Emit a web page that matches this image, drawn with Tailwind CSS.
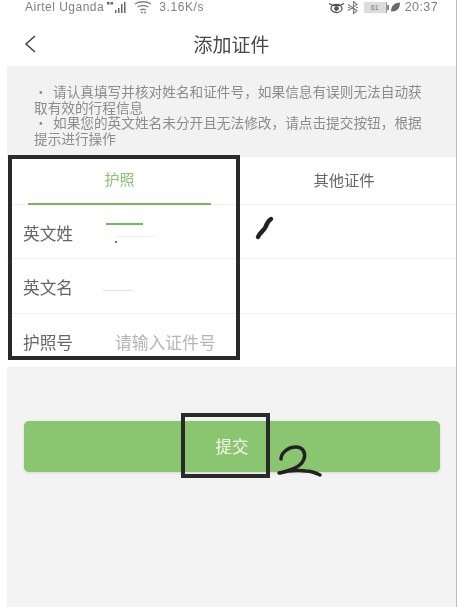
<!DOCTYPE html>
<html lang="zh">
<head>
  <meta charset="UTF-8">
  <title>添加证件</title>
  <script src="https://cdn.jsdelivr.net/npm/@tailwindcss/browser@4"></script>
</head>
<body class="bg-white w-[458px] h-[607px] overflow-hidden relative blur-[0.35px] font-['Noto_Sans_CJK_SC','Liberation_Sans',sans-serif]">
  <div class="ml-[7px] w-[449px] h-[607px] border-r border-[#bbbbbb] box-content flex flex-col">
    <!-- Status bar -->
    <div class="h-[14px] pl-[18px] pr-[18px] flex items-center justify-between text-[12px] text-[#808080] font-['Liberation_Sans']">
      <div class="flex items-center">
        <span class="tracking-[0.5px]">Airtel Uganda</span>
        <svg class="ml-[2px]" width="24" height="13" viewBox="0 0 24 13" fill="#666666"><rect x="1" y="1" width="2.500" height="2.500"/><rect x="4.500" y="1" width="2.500" height="2.500"/><rect x="9" y="9" width="1.500" height="3"/><rect x="12" y="7" width="1.500" height="5"/><rect x="15" y="3" width="1.500" height="9"/><rect x="18" y="1" width="1.500" height="11"/></svg>
        <svg class="ml-[4px]" width="18" height="13" viewBox="0 0 18 13" fill="none" stroke="#858585" stroke-width="1.300"><path d="M1 3c4-3 12-3 16 0M3.500 6c3-2 8-2 11 0M6 9c2-1 4-1 6 0"/><circle cx="8" cy="11.500" r="1" fill="#858585" stroke="none"/><circle cx="11" cy="11.500" r="1" fill="#858585" stroke="none"/></svg>
        <span class="ml-[7px] tracking-[0.6px]">3.16K/s</span>
      </div>
      <div class="flex items-center">
        <svg width="17" height="13" viewBox="0 0 17 13" fill="none" stroke="#555555" stroke-width="1.300"><path d="M1 2.500c4 3 11 3 15 0"/><ellipse cx="8.500" cy="7.500" rx="5.500" ry="4"/><circle cx="8.500" cy="7.500" r="1.700" fill="#555555"/></svg>
        <svg class="ml-[2px]" width="12" height="13" viewBox="0 0 12 13" fill="none" stroke="#808080" stroke-width="1.200"><path d="M1 3.500l9 6-3.500 3V.5L10 3.500l-9 6M1 6.500h2M9 6.500h2"/></svg>
        <div class="ml-[5px] w-[23px] h-[11px] bg-[#dcdcdc] text-[7px] leading-[11px] text-center text-[#777777] border-r border-[#999999]">61</div>
        <div class="w-[2px] h-[5px] bg-[#888888]"></div>
        <svg class="ml-[1px]" width="11" height="12" viewBox="0 0 11 12" fill="#6a6a6a"><path d="M1 10.500C1 5 4 2 10 1.500c0 6-3 9-8 9z"/></svg>
        <span class="text-[12.500px] tracking-[0.4px] ml-[4px]">20:37</span>
      </div>
    </div>
    <!-- Header -->
    <div class="h-[52px] flex items-center justify-center relative text-[19px] text-[#484848]">
      <svg class="absolute left-[17px] top-[21px]" width="12" height="18" viewBox="0 0 12 18" fill="none" stroke="#444444" stroke-width="1.600"><path d="M11 1L2 9l9 8"/></svg>
      <span class="mt-[8px]">添加证件</span>
    </div>
    <!-- Notice -->
    <div class="h-[91px] bg-[#f2f2f2] pl-[27px] pr-[26px] pt-[18px] text-[13.670px] leading-[15.700px] text-[#8c8c8c]">
      <p><span class="inline-block w-[19px]">·</span>请认真填写并核对姓名和证件号，如果信息有误则无法自动获取有效的行程信息</p>
      <p><span class="inline-block w-[19px]">·</span>如果您的英文姓名未分开且无法修改，请点击提交按钮，根据提示进行操作</p>
    </div>
    <!-- Form -->
    <div class="h-[210px] bg-white text-[#666666]">
      <div class="flex h-[48px] border-b border-[#f0f0f0]">
        <div class="w-[225px] relative flex items-center justify-center text-[15px] text-[#88c46f] pb-[3px]">
          护照
          <div class="absolute left-[21px] bottom-[-1px] w-[183px] h-[2px] bg-[#74b85c]"></div>
        </div>
        <div class="flex-1 flex items-center justify-center text-[15.300px] pb-[3px]">其他证件</div>
      </div>
      <div class="h-[54px] pl-[16px] flex items-center border-b border-[#f0f0f0] text-[16.700px]">
        <span class="w-[83px] mt-[4px]">英文姓</span>
        <div class="relative w-[50px] h-full">
          <div class="absolute left-0 top-[18px] w-[37px] h-[2px] bg-[#74b85c]"></div>
          <div class="absolute left-[9px] top-[36px] w-[2px] h-[2px] bg-[#3f8f8f]"></div>
          <div class="absolute left-[10px] top-[31px] w-[40px] h-px bg-[#f0f0f0]"></div>
        </div>
      </div>
      <div class="h-[55px] pl-[16px] flex items-center border-b border-[#f0f0f0] text-[16.700px]">
        <span class="w-[80px] mt-[4px]">英文名</span>
        <div class="w-[30px] h-px bg-[#e2e2e2] mt-[9px]"></div>
      </div>
      <div class="h-[53px] pl-[16px] flex items-center text-[16.700px]">
        <span class="w-[92px] mt-[4px]">护照号</span>
        <span class="text-[#b5b5b5] text-[16.800px] mt-[4px]">请输入证件号</span>
      </div>
    </div>
    <!-- Button area -->
    <div class="flex-1 bg-[#f3f3f3] pt-[54px] pl-[17px] pr-[16px]">
      <button class="w-full h-[51px] rounded-[5px] bg-[#8ac56f] text-[#f2f8ee] text-[16.500px] shadow-sm">提交</button>
    </div>
  </div>

  <!-- Hand-drawn annotations over the screenshot -->
  <div class="absolute left-[8px] top-[155px] w-[232px] h-[205px] border-[4.500px] border-[#2a2a2a]"></div>
  <div class="absolute left-[181px] top-[413px] w-[89px] h-[65px] border-[4px] border-[#2a2a2a]"></div>
  <svg class="absolute left-0 top-0 pointer-events-none" width="458" height="607" fill="none" stroke="#222222" stroke-linecap="round" stroke-linejoin="round">
    <path d="M271 219c-3 2-4 4-5 7-1 4-6 6-8 11" stroke-width="4.500"/>
    <path d="M281 459c0-6 7-12 15-12 7 0 10 6 8 12-2 6-10 10-17 12-3 1-6 2-8 2 8-2 18-3 27-2 6 0 10 2 14 4" stroke-width="3.500"/>
  </svg>
</body>
</html>
